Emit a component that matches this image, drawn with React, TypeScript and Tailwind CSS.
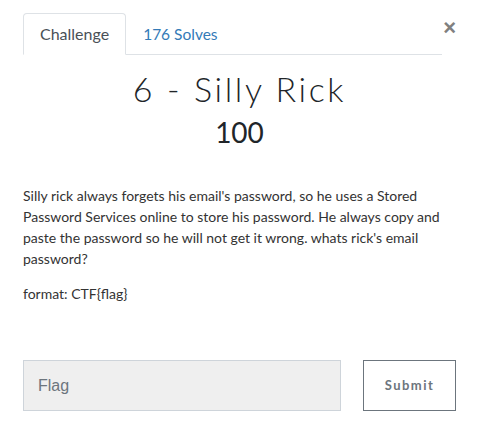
import React from "react";

export default function App() {
  return (
    <div className="w-[478px] h-[432px] bg-white pl-[23px] pr-[22px] pt-[13px]" style={{ fontFamily: "Lato, 'Noto Sans', sans-serif" }}>
      <div className="flex items-start">
        <div className="flex flex-1 border-b border-[#dee2e6]">
          <div className="-mb-px rounded-t-[4px] border border-[#dee2e6] border-b-white bg-white px-4 py-2 text-[16px] leading-6 text-[#495057]">
            Challenge
          </div>
          <div className="-mb-px border border-transparent px-4 py-2 text-[15.5px] leading-6 text-[#337ab7]">
            176 Solves
          </div>
        </div>
        <button className="mt-[3px] w-[14px] text-right text-[22px] font-bold leading-6 text-[#808080]" style={{ fontFamily: "'Liberation Sans', Arial, sans-serif" }}>
          ×
        </button>
      </div>
      <h3 className="mt-[14px] text-center text-[34px] font-light leading-[40px] tracking-[2.6px] text-[#212529]">
        6 - Silly Rick
      </h3>
      <h4 className="mt-[6px] text-center text-[28px] leading-[34px] text-[#212529]">100</h4>
      <div className="mt-[36px] text-[14px] leading-[21px] text-[#333]">
        <p>
          Silly rick always forgets his email's password, so he uses a Stored Password Services online to store his password. He always copy and paste the password so he will not get it wrong. whats rick's email password?
        </p>
        <p className="mt-[14px]">format: CTF{"{"}flag{"}"}</p>
      </div>
      <div className="mt-[56px] flex items-start">
        <div className="flex h-[51px] w-[318px] items-center border border-[#ced4da] bg-[#efefef] px-[14px] text-[16px] text-[#6c757d]" style={{ fontFamily: "'Liberation Sans', Arial, sans-serif" }}>
          Flag
        </div>
        <button className="ml-auto h-[51px] w-[93px] border border-[#6c757d] bg-white text-[13px] font-bold tracking-[1.5px] text-[#6c757d]">
          Submit
        </button>
      </div>
    </div>
  );
}
